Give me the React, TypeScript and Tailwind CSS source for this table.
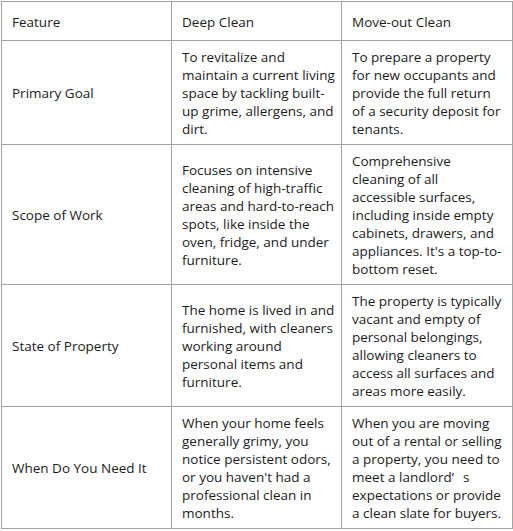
type Row = { feature: string; deep: string[]; moveOut: string[] };

const rows: Row[] = [
  {
    feature: "Primary Goal",
    deep: ["To revitalize and", "maintain a current living", "space by tackling built-", "up grime, allergens, and", "dirt."],
    moveOut: ["To prepare a property", "for new occupants and", "provide the full return", "of a security deposit for", "tenants."],
  },
  {
    feature: "Scope of Work",
    deep: [
      "Focuses on intensive",
      "cleaning of high-traffic",
      "areas and hard-to-reach",
      "spots, like inside the",
      "oven, fridge, and under",
      "furniture.",
    ],
    moveOut: [
      "Comprehensive",
      "cleaning of all",
      "accessible surfaces,",
      "including inside empty",
      "cabinets, drawers, and",
      "appliances. It's a top-to-",
      "bottom reset.",
    ],
  },
  {
    feature: "State of Property",
    deep: ["The home is lived in and", "furnished, with cleaners", "working around", "personal items and", "furniture."],
    moveOut: [
      "The property is typically",
      "vacant and empty of",
      "personal belongings,",
      "allowing cleaners to",
      "access all surfaces and",
      "areas more easily.",
    ],
  },
  {
    feature: "When Do You Need It",
    deep: [
      "When your home feels",
      "generally grimy, you",
      "notice persistent odors,",
      "or you haven't had a",
      "professional clean in",
      "months.",
    ],
    moveOut: [
      "When you are moving",
      "out of a rental or selling",
      "a property, you need to",
      "LANDLORD",
      "expectations or provide",
      "a clean slate for buyers.",
    ],
  },
];

function Lines({ lines }: { lines: string[] }) {
  return (
    <>
      {lines.map((l) =>
        l === "LANDLORD" ? (
          <div key={l} className="whitespace-nowrap">
            meet a landlord’<span className="pl-[9px]">s</span>
          </div>
        ) : (
          <div key={l} className="whitespace-nowrap">
            {l}
          </div>
        )
      )}
    </>
  );
}

export default function App() {
  const cell = "border border-[#a3a3a3] px-[10px] pt-[7px] pb-[6px] align-middle";
  const head = "border border-[#a3a3a3] px-[10px] pt-[11px] pb-[9px] text-left align-middle font-normal";
  return (
    <div className="bg-white pl-px pt-px font-['Open_Sans',sans-serif] text-[13.5px] leading-[18px] text-[#1c1c1c]">
      <table className="w-[511px] table-fixed border-collapse">
        <thead>
          <tr>
            <th className={`${head} w-[170px]`}>Feature</th>
            <th className={`${head} w-[170px]`}>Deep Clean</th>
            <th className={`${head} w-[171px]`}>Move-out Clean</th>
          </tr>
        </thead>
        <tbody>
          {rows.map((r) => (
            <tr key={r.feature}>
              <td className={cell}>{r.feature}</td>
              <td className={cell}>
                <Lines lines={r.deep} />
              </td>
              <td className={cell}>
                <Lines lines={r.moveOut} />
              </td>
            </tr>
          ))}
        </tbody>
      </table>
    </div>
  );
}
